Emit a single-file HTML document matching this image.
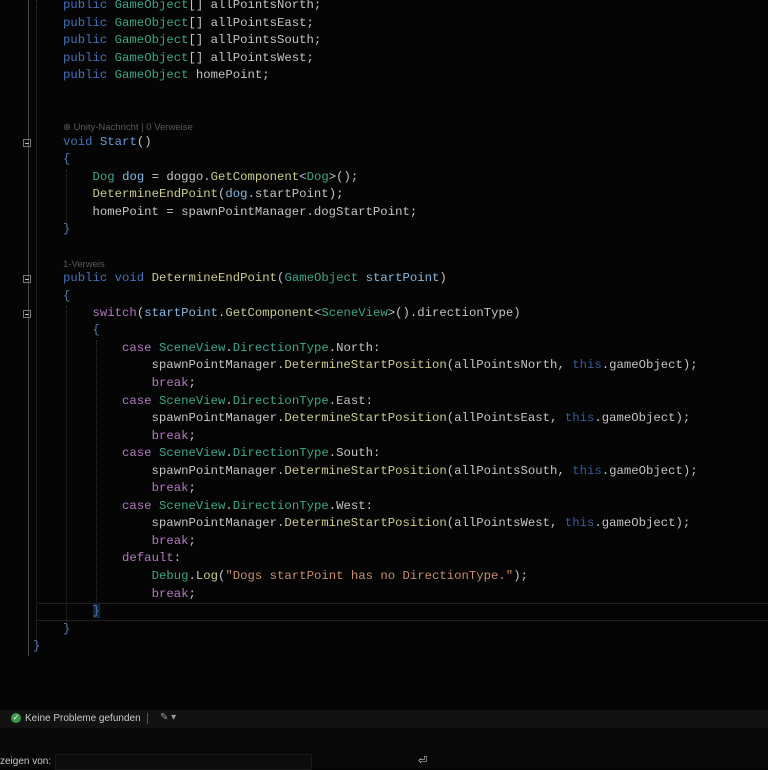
<!DOCTYPE html>
<html><head><meta charset="utf-8"><style>
body{margin:0;width:768px;height:768px;background:#050505;overflow:hidden;position:relative;font-family:"Liberation Mono",monospace;}
.l{position:absolute;left:63px;font-size:12.3px;line-height:17px;white-space:pre;color:#c4c4c4;margin-top:2px;}
.k{color:#4670b8}.t{color:#3ea58a}.m{color:#cbcb92}.v{color:#88b8e0}.p{color:#b478c4}.s{color:#c88c70}.th{color:#3a5a9a}
.cl{position:absolute;left:63px;font-family:"Liberation Sans",sans-serif;font-size:9.5px;color:#5a5a5a;margin-top:2px;}
.g{position:absolute;width:0;border-left:1px dotted #333;}
.fold{position:absolute;left:23px;width:8px;height:8px;border:1px solid #777;box-sizing:border-box;margin-top:2px;}
.fold:after{content:"";position:absolute;left:1px;top:3px;width:4px;height:1px;background:#bbb;}
</style></head><body>
<div style="position:absolute;left:28px;top:0;width:1px;height:656px;background:#444"></div>
<div class="g" style="left:36px;top:0;height:650px"></div>
<div class="g" style="left:66px;top:170px;height:52px"></div>
<div class="g" style="left:66px;top:306px;height:316px"></div>
<div class="g" style="left:96px;top:340px;height:264px"></div>
<div class="fold" style="top:137px"></div>
<div class="fold" style="top:273px"></div>
<div class="fold" style="top:308px"></div>
<div style="position:absolute;left:36px;top:603px;width:732px;height:16px;border-top:1px solid #1e1e1e;border-bottom:1px solid #1e1e1e"></div>

<div class="l" style="top:-5px"><span class="k">public</span> <span class="t">GameObject</span>[] allPointsNorth;</div>
<div class="l" style="top:13px"><span class="k">public</span> <span class="t">GameObject</span>[] allPointsEast;</div>
<div class="l" style="top:30px"><span class="k">public</span> <span class="t">GameObject</span>[] allPointsSouth;</div>
<div class="l" style="top:48px"><span class="k">public</span> <span class="t">GameObject</span>[] allPointsWest;</div>
<div class="l" style="top:65px"><span class="k">public</span> <span class="t">GameObject</span> homePoint;</div>
<div class="cl" style="top:120px">⊕ Unity-Nachricht | 0 Verweise</div>
<div class="l" style="top:132px"><span class="k">void</span> <span class="m" style="color:#6a9ad8">Start</span>()</div>
<div class="l" style="top:149px;color:#5878a8">{</div>
<div class="l" style="top:167px">    <span class="t">Dog</span> <span class="v">dog</span> = doggo.<span class="m">GetComponent</span>&lt;<span class="t">Dog</span>&gt;();</div>
<div class="l" style="top:184px">    <span class="m">DetermineEndPoint</span>(<span class="v">dog</span>.startPoint);</div>
<div class="l" style="top:202px">    homePoint = spawnPointManager.dogStartPoint;</div>
<div class="l" style="top:219px;color:#5878a8">}</div>
<div class="cl" style="top:257px">1-Verweis</div>
<div class="l" style="top:268px"><span class="k">public</span> <span class="k">void</span> <span class="m">DetermineEndPoint</span>(<span class="t">GameObject</span> <span class="v">startPoint</span>)</div>
<div class="l" style="top:286px;color:#5878a8">{</div>
<div class="l" style="top:303px">    <span class="p">switch</span>(<span class="v">startPoint</span>.<span class="m">GetComponent</span>&lt;<span class="t">SceneView</span>&gt;().directionType)</div>
<div class="l" style="top:320px;color:#5878a8">    {</div>
<div class="l" style="top:338px">        <span class="p">case</span> <span class="t">SceneView</span>.<span class="t">DirectionType</span>.North:</div>
<div class="l" style="top:355px">            spawnPointManager.<span class="m">DetermineStartPosition</span>(allPointsNorth, <span class="th">this</span>.gameObject);</div>
<div class="l" style="top:373px">            <span class="p">break</span>;</div>
<div class="l" style="top:391px">        <span class="p">case</span> <span class="t">SceneView</span>.<span class="t">DirectionType</span>.East:</div>
<div class="l" style="top:408px">            spawnPointManager.<span class="m">DetermineStartPosition</span>(allPointsEast, <span class="th">this</span>.gameObject);</div>
<div class="l" style="top:426px">            <span class="p">break</span>;</div>
<div class="l" style="top:443px">        <span class="p">case</span> <span class="t">SceneView</span>.<span class="t">DirectionType</span>.South:</div>
<div class="l" style="top:461px">            spawnPointManager.<span class="m">DetermineStartPosition</span>(allPointsSouth, <span class="th">this</span>.gameObject);</div>
<div class="l" style="top:478px">            <span class="p">break</span>;</div>
<div class="l" style="top:496px">        <span class="p">case</span> <span class="t">SceneView</span>.<span class="t">DirectionType</span>.West:</div>
<div class="l" style="top:513px">            spawnPointManager.<span class="m">DetermineStartPosition</span>(allPointsWest, <span class="th">this</span>.gameObject);</div>
<div class="l" style="top:531px">            <span class="p">break</span>;</div>
<div class="l" style="top:548px">        <span class="p">default</span>:</div>
<div class="l" style="top:566px">            <span class="t">Debug</span>.<span class="m">Log</span>(<span class="s">"Dogs startPoint has no DirectionType."</span>);</div>
<div class="l" style="top:584px">            <span class="p">break</span>;</div>
<div class="l" style="top:601px;color:#5878a8">    <span style="background:#0e2540">}</span></div>
<div class="l" style="top:619px;color:#5878a8">}</div>
<div class="l" style="top:636px;left:33px;color:#5878a8">}</div>

<div style="position:absolute;left:0;top:710px;width:768px;height:18px;background:#121212;font-family:'Liberation Sans',sans-serif;font-size:10px;color:#c8c8c8">
<div style="position:absolute;left:11px;top:3px;width:10px;height:10px;border-radius:50%;background:#3a9a4a;color:#fff;font-size:8px;line-height:10px;text-align:center">✓</div>
<div style="position:absolute;left:25px;top:3px">Keine Probleme gefunden</div>
<div style="position:absolute;left:147px;top:3px;width:1px;height:11px;background:#555"></div>
<div style="position:absolute;left:160px;top:2px;color:#999">✎ ▾</div>
</div>
<div style="position:absolute;left:0;top:728px;width:768px;height:40px;background:#080808"></div>
<div style="position:absolute;left:0;top:756px;font-family:'Liberation Sans',sans-serif;font-size:10px;color:#c8c8c8">zeigen von:</div>
<div style="position:absolute;left:55px;top:754px;width:255px;height:14px;background:#0c0c0c;border:1px solid #181818"></div>
<div style="position:absolute;left:418px;top:754px;font-size:11px;color:#ccc;font-family:'DejaVu Sans',sans-serif">⏎</div>
</body></html>
